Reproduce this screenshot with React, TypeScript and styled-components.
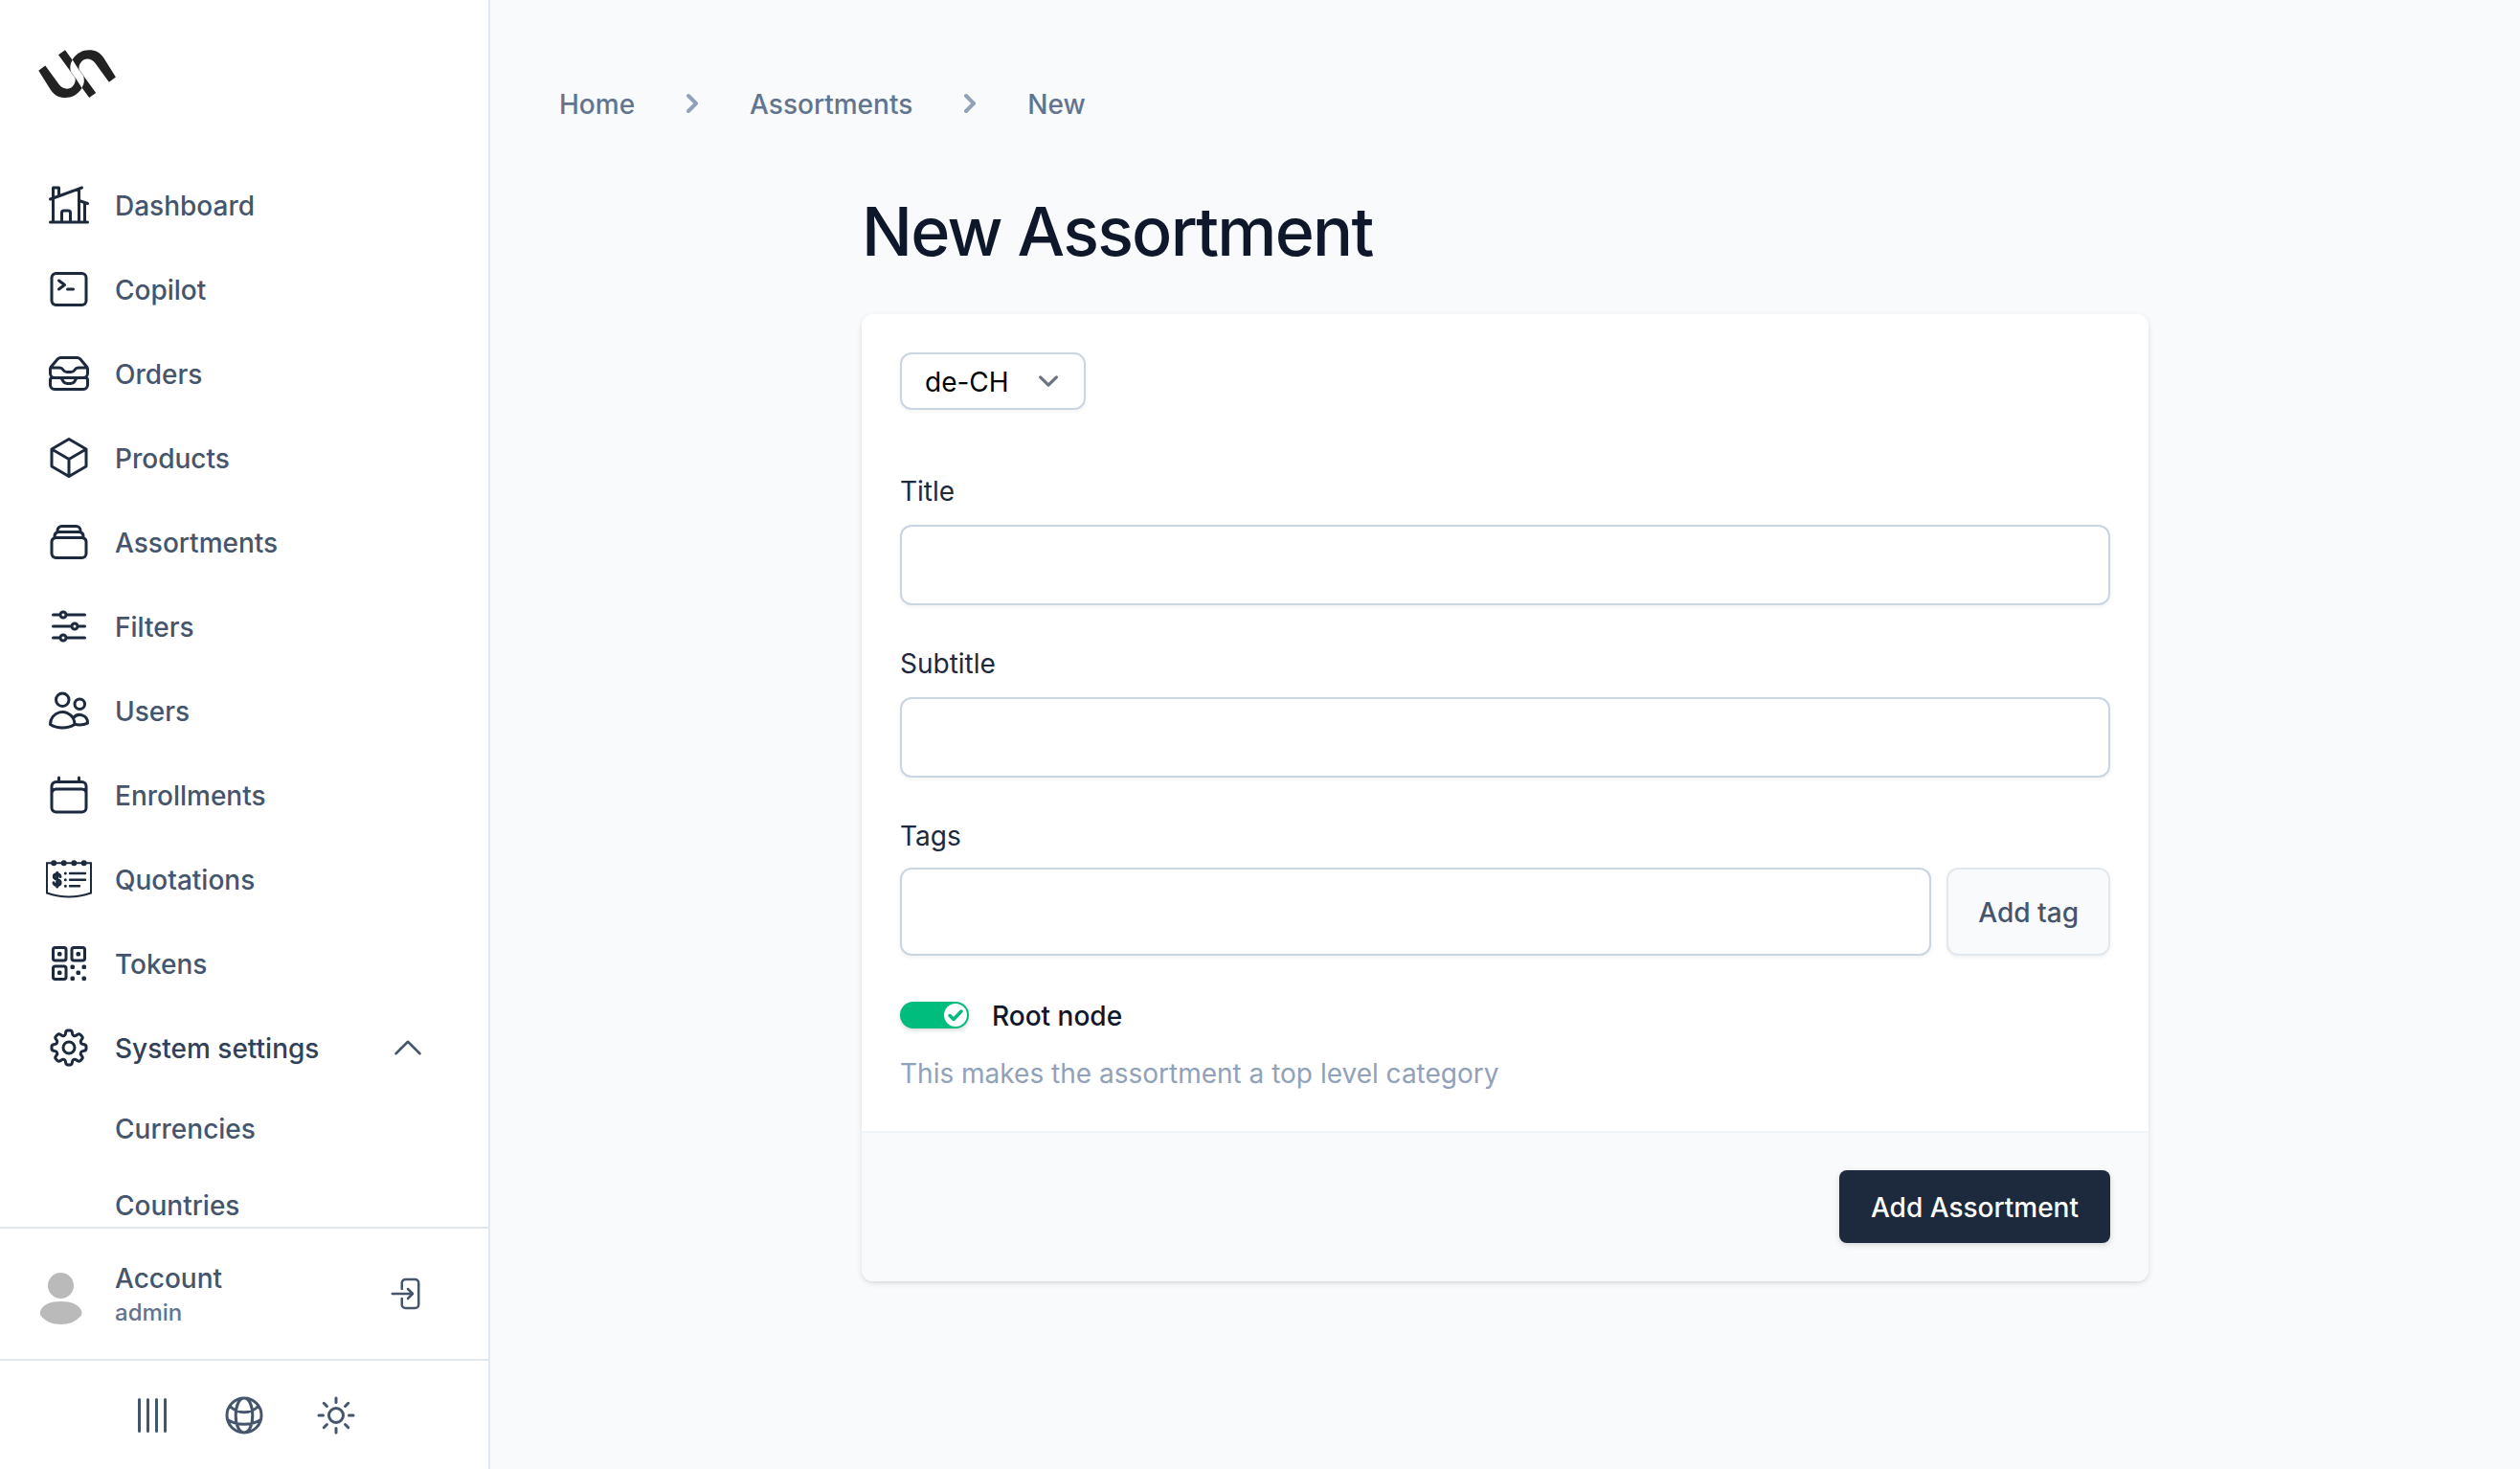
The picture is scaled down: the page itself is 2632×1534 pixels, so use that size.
import React, { useState } from "react";
import styled, { createGlobalStyle, css } from "styled-components";

const GlobalStyle = createGlobalStyle`
  *, *::before, *::after { box-sizing: border-box; }
  body {
    margin: 0;
    background: #f8fafc;
    color: #0f172b;
    font-family: Inter, "Liberation Sans", sans-serif;
    font-size: 28px;
    line-height: 40px;
  }
  button, input, select { font: inherit; }
`;

const Shell = styled.div`
  display: flex;
  height: 100vh;
  overflow: hidden;
`;

const Sidebar = styled.aside`
  flex: none;
  width: 512px;
  display: flex;
  flex-direction: column;
  background: #fff;
  border-right: 2px solid #e2e8f0;
`;

const LogoLink = styled.a`
  display: block;
  flex: none;
  padding: 48px 40px 0;
  height: 166px;
`;

const NavArea = styled.nav`
  flex: 1;
  min-height: 0;
  overflow: hidden;
  padding: 8px 32px 0;
`;

const List = styled.ul`
  display: flex;
  flex-direction: column;
  gap: 8px;
  margin: 0;
  padding: 0;
  list-style: none;
`;

const rowStyle = css`
  display: flex;
  align-items: center;
  gap: 24px;
  width: 100%;
  height: 80px;
  padding: 0 16px;
  border: 0;
  background: none;
  color: #45556c;
  font-weight: 500;
  text-align: left;
  text-decoration: none;
`;

const NavLink = styled.a`${rowStyle}`;
const NavToggle = styled.button`
  ${rowStyle}
  padding-right: 32px;
  color: #314158;
`;
const RowLabel = styled.span`
  flex: 1;
  padding-top: 2px;
`;

const SubLink = styled.a`
  display: block;
  padding: 17px 16px 15px 88px;
  line-height: 40px;
  color: #45556c;
  font-weight: 500;
  text-decoration: none;
`;

const IconSvg = styled.svg<{ $size?: number; $color?: string }>`
  flex: none;
  display: block;
  width: ${(p) => p.$size ?? 48}px;
  height: ${(p) => p.$size ?? 48}px;
  color: ${(p) => p.$color ?? "#1d293d"};
  overflow: visible;
`;

const AccountBar = styled.div`
  flex: none;
  display: flex;
  align-items: center;
  height: 138px;
  padding: 0 64px 0 40px;
  border-top: 2px solid #e2e8f0;
`;

const AccountText = styled.a`
  flex: 1;
  display: flex;
  flex-direction: column;
  margin-left: 32px;
  padding-top: 2px;
  color: #45556c;
  font-weight: 500;
  line-height: 38px;
  text-decoration: none;
`;

const AccountName = styled.span`
  color: #62748e;
  font-size: 24px;
  line-height: 34px;
`;

const IconButton = styled.button`
  display: flex;
  padding: 0;
  border: 0;
  background: none;
`;

const ToolBar = styled.div`
  flex: none;
  display: flex;
  justify-content: center;
  align-items: center;
  gap: 48px;
  height: 115px;
  border-top: 2px solid #e2e8f0;
`;

const Main = styled.main`
  flex: 1;
  min-width: 0;
  padding: 87px 72px 0;
`;

const Crumbs = styled.ol`
  display: flex;
  align-items: center;
  gap: 40px;
  margin: 0;
  padding: 0;
  list-style: none;
`;

const CrumbItem = styled.li`
  display: flex;
  align-items: center;
  gap: 40px;
`;

const CrumbLink = styled.a`
  padding-top: 2px;
  color: #62748e;
  font-weight: 500;
  text-decoration: none;
`;

const Content = styled.div`
  max-width: 1344px;
  margin: 0 auto;
`;

const Title = styled.h1`
  margin: 73px 0 46px;
  font-size: 70px;
  line-height: 80px;
  font-weight: 500;
  letter-spacing: -0.025em;
  color: #0f172b;
`;

const Card = styled.form`
  overflow: hidden;
  border-radius: 12px;
  background: #fff;
  box-shadow: 0 2px 6px rgba(0, 0, 0, 0.1), 0 2px 4px -2px rgba(0, 0, 0, 0.1);
`;

const CardBody = styled.div`
  display: flex;
  flex-direction: column;
  align-items: stretch;
  padding: 40px;
`;

const SelectWrap = styled.div`
  display: grid;
  align-items: center;
  align-self: flex-start;
  margin-bottom: 64px;
  & > * { grid-area: 1 / 1; }
  & > svg { justify-self: end; margin-right: 18px; pointer-events: none; }
`;

const Select = styled.select`
  appearance: none;
  width: 194px;
  height: 60px;
  padding: 2px 64px 0 24px;
  border: 2px solid #cad5e2;
  border-radius: 12px;
  background: #fff;
  color: #000;
  box-shadow: 0 2px 4px rgba(0, 0, 0, 0.05);
`;

const Field = styled.div<{ $tight?: boolean }>`
  display: flex;
  flex-direction: column;
  gap: ${(p) => (p.$tight ? 13 : 15)}px;
  margin-bottom: ${(p) => (p.$tight ? 42 : 40)}px;
`;

const Label = styled.label`
  padding-top: 1px;
  color: #1d293d;
`;

const Input = styled.input<{ $tall?: boolean }>`
  flex: ${(p) => (p.$tall ? "1" : "none")};
  min-width: 0;
  height: ${(p) => (p.$tall ? 92 : 84)}px;
  padding: 0 24px;
  border: 2px solid #cad5e2;
  border-radius: 12px;
  background: #fff;
  color: #0f172b;
  box-shadow: 0 2px 4px rgba(0, 0, 0, 0.05);
`;

const TagRow = styled.div`
  display: flex;
  gap: 16px;
`;

const TagButton = styled.button`
  padding: 2px 31px 0;
  border: 2px solid #e2e8f0;
  border-radius: 12px;
  background: #f8fafc;
  color: #45556c;
  font-weight: 500;
  box-shadow: 0 2px 4px rgba(0, 0, 0, 0.05);
`;

const SwitchLabel = styled.label`
  display: flex;
  align-items: center;
  gap: 24px;
  height: 40px;
  color: #0f172b;
  font-weight: 500;
`;

const Switch = styled.input`
  appearance: none;
  flex: none;
  width: 72px;
  height: 28px;
  margin: 0;
  border-radius: 14px;
  background-color: ${(p) => (p.checked ? "#00bc7d" : "#cad5e2")};
  box-shadow: 0 2px 4px rgba(0, 0, 0, 0.15);
`;

const SwitchBox = styled.span<{ $on: boolean }>`
  display: grid;
  align-items: center;
  & > * { grid-area: 1 / 1; }
  & > svg {
    justify-self: ${(p) => (p.$on ? "end" : "start")};
    margin: 0 2px;
    pointer-events: none;
  }
`;

const SwitchText = styled.span`
  padding-top: 2px;
`;

const Hint = styled.p`
  margin: 21px 0 0;
  padding-bottom: 0;
  color: #90a1b9;
`;

const CardFooter = styled.div`
  display: flex;
  justify-content: flex-end;
  padding: 39px 40px 40px;
  border-top: 2px solid #f1f5f9;
  background: #f8fafc;
`;

const Submit = styled.button`
  height: 76px;
  padding: 2px 33px 0;
  border: 0;
  border-radius: 8px;
  background: #1d293d;
  color: #fff;
  font-weight: 500;
  box-shadow: 0 2px 6px rgba(0, 0, 0, 0.15);
`;

type IconProps = { d: string; size?: number; color?: string; weight?: number };

const LineIcon = ({ d, size, color, weight = 1.5 }: IconProps) => (
  <IconSvg $size={size} $color={color} viewBox="0 0 24 24" fill="none" stroke="currentColor"
    strokeWidth={weight} strokeLinecap="round" strokeLinejoin="round" aria-hidden="true">
    <path d={d} />
  </IconSvg>
);

const paths = {
  home: "M8.25 21v-4.875c0-.621.504-1.125 1.125-1.125h2.25c.621 0 1.125.504 1.125 1.125V21m0 0h4.5V3.545M12.75 21h7.5V10.75M2.25 21h1.5m18 0h-18M2.25 9l4.5-1.636M18.75 3l-1.5.545m0 6.205 3 1m1.5.5-1.5-.5M6.75 7.364V3h-3v18m3-13.636 10.5-3.819",
  command: "m6.75 7.5 3 2.25-3 2.25m4.5 0h3m-9 8.25h13.5A2.25 2.25 0 0 0 21 18V6a2.25 2.25 0 0 0-2.25-2.25H5.25A2.25 2.25 0 0 0 3 6v12a2.25 2.25 0 0 0 2.25 2.25Z",
  inbox: "m7.875 14.25 1.214 1.942a2.25 2.25 0 0 0 1.908 1.058h2.006c.776 0 1.497-.4 1.908-1.058l1.214-1.942M2.41 9h4.636a2.25 2.25 0 0 1 1.872 1.002l.164.246a2.25 2.25 0 0 0 1.872 1.002h2.092a2.25 2.25 0 0 0 1.872-1.002l.164-.246A2.25 2.25 0 0 1 16.954 9h4.636M2.41 9a2.25 2.25 0 0 0-.16.832V12a2.25 2.25 0 0 0 2.25 2.25h15A2.25 2.25 0 0 0 21.75 12V9.832c0-.287-.055-.57-.16-.832M2.41 9a2.25 2.25 0 0 1 .382-.632l3.285-3.832a2.25 2.25 0 0 1 1.708-.786h8.43c.657 0 1.281.287 1.709.786l3.284 3.832c.163.19.291.404.382.632M4.5 20.25h15A2.25 2.25 0 0 0 21.75 18v-2.625c0-.621-.504-1.125-1.125-1.125H3.375c-.621 0-1.125.504-1.125 1.125V18a2.25 2.25 0 0 0 2.25 2.25Z",
  cube: "m21 7.5-9-5.25L3 7.5m18 0-9 5.25m9-5.25v9l-9 5.25M3 7.5l9 5.25M3 7.5v9l9 5.25m0-9v9",
  stack: "M6 6.878V6a2.25 2.25 0 0 1 2.25-2.25h7.5A2.25 2.25 0 0 1 18 6v.878m-12 0c.235-.083.487-.128.75-.128h10.5c.263 0 .515.045.75.128m-12 0A2.25 2.25 0 0 0 4.5 9v.878m13.5-3A2.25 2.25 0 0 1 19.5 9v.878m0 0a2.246 2.246 0 0 0-.75-.128H5.25c-.263 0-.515.045-.75.128m15 0A2.25 2.25 0 0 1 21 12v6a2.25 2.25 0 0 1-2.25 2.25H5.25A2.25 2.25 0 0 1 3 18v-6c0-.98.626-1.813 1.5-2.122",
  sliders: "M10.5 6h9.75M10.5 6a1.5 1.5 0 1 1-3 0m3 0a1.5 1.5 0 1 0-3 0M3.75 6H7.5m3 12h9.75m-9.75 0a1.5 1.5 0 0 1-3 0m3 0a1.5 1.5 0 0 0-3 0m-3.75 0H7.5m9-6h3.75m-3.75 0a1.5 1.5 0 0 1-3 0m3 0a1.5 1.5 0 0 0-3 0m-9.75 0h9.75",
  users: "M15 19.128a9.38 9.38 0 0 0 2.625.372 9.337 9.337 0 0 0 4.121-.952 4.125 4.125 0 0 0-7.533-2.493M15 19.128v-.003c0-1.113-.285-2.16-.786-3.07M15 19.128v.106A12.318 12.318 0 0 1 8.624 21c-2.331 0-4.512-.645-6.374-1.766l-.001-.109a6.375 6.375 0 0 1 11.964-3.07M12 6.375a3.375 3.375 0 1 1-6.75 0 3.375 3.375 0 0 1 6.75 0Zm8.25 2.25a2.625 2.625 0 1 1-5.25 0 2.625 2.625 0 0 1 5.25 0Z",
  calendar: "M6.75 3v2.25M17.25 3v2.25M3 18.75V7.5a2.25 2.25 0 0 1 2.25-2.25h13.5A2.25 2.25 0 0 1 21 7.5v11.25m-18 0A2.25 2.25 0 0 0 5.25 21h13.5A2.25 2.25 0 0 0 21 18.75m-18 0v-7.5A2.25 2.25 0 0 1 5.25 9h13.5A2.25 2.25 0 0 1 21 11.25v7.5",
  qr: "M3.75 4.875c0-.621.504-1.125 1.125-1.125h4.5c.621 0 1.125.504 1.125 1.125v4.5c0 .621-.504 1.125-1.125 1.125h-4.5A1.125 1.125 0 0 1 3.75 9.375v-4.5ZM3.75 14.625c0-.621.504-1.125 1.125-1.125h4.5c.621 0 1.125.504 1.125 1.125v4.5c0 .621-.504 1.125-1.125 1.125h-4.5a1.125 1.125 0 0 1-1.125-1.125v-4.5ZM13.5 4.875c0-.621.504-1.125 1.125-1.125h4.5c.621 0 1.125.504 1.125 1.125v4.5c0 .621-.504 1.125-1.125 1.125h-4.5A1.125 1.125 0 0 1 13.5 9.375v-4.5Z M6.75 6.75h.75v.75h-.75v-.75ZM6.75 16.5h.75v.75h-.75v-.75ZM16.5 6.75h.75v.75h-.75v-.75ZM13.5 13.5h.75v.75h-.75v-.75ZM13.5 19.5h.75v.75h-.75v-.75ZM19.5 13.5h.75v.75h-.75v-.75ZM19.5 19.5h.75v.75h-.75v-.75ZM16.5 16.5h.75v.75h-.75v-.75Z",
  cog: "M10.343 3.94c.09-.542.56-.94 1.11-.94h1.093c.55 0 1.02.398 1.11.94l.149.894c.07.424.384.764.78.93.398.164.855.142 1.205-.108l.737-.527a1.125 1.125 0 0 1 1.45.12l.773.774c.39.389.44 1.002.12 1.45l-.527.737c-.25.35-.272.806-.107 1.204.165.397.505.71.93.78l.893.15c.543.09.94.559.94 1.109v1.094c0 .55-.397 1.02-.94 1.11l-.894.149c-.424.07-.764.383-.929.78-.165.398-.143.854.107 1.204l.527.738c.32.447.269 1.06-.12 1.45l-.774.773a1.125 1.125 0 0 1-1.449.12l-.738-.527c-.35-.25-.806-.272-1.203-.107-.398.165-.71.505-.781.929l-.149.894c-.09.542-.56.94-1.11.94h-1.094c-.55 0-1.019-.398-1.11-.94l-.148-.894c-.071-.424-.384-.764-.781-.93-.398-.164-.854-.142-1.204.108l-.738.527c-.447.32-1.06.269-1.45-.12l-.773-.774a1.125 1.125 0 0 1-.12-1.45l.527-.737c.25-.35.272-.806.108-1.204-.165-.397-.506-.71-.93-.78l-.894-.15c-.542-.09-.94-.56-.94-1.109v-1.094c0-.55.398-1.02.94-1.11l.894-.149c.424-.07.765-.383.93-.78.165-.398.143-.854-.108-1.204l-.526-.738a1.125 1.125 0 0 1 .12-1.45l.773-.773a1.125 1.125 0 0 1 1.45-.12l.737.527c.35.25.807.272 1.204.107.397-.165.71-.505.78-.929l.15-.894Z M15 12a3 3 0 1 1-6 0 3 3 0 0 1 6 0Z",
  chevronUp: "m4.5 15.75 7.5-7.5 7.5 7.5",
  exit: "M8.25 9V5.25A2.25 2.25 0 0 1 10.5 3h6a2.25 2.25 0 0 1 2.25 2.25v13.5A2.25 2.25 0 0 1 16.5 21h-6a2.25 2.25 0 0 1-2.25-2.25V15M12 9l3 3m0 0-3 3m3-3H2.25",
  bars: "M5.25 3.75v16.5M9.75 3.75v16.5M14.25 3.75v16.5M18.75 3.75v16.5",
  globe: "M12 21a9 9 0 1 0 0-18 9 9 0 0 0 0 18ZM12 21c-2.6 0-4.4-4-4.4-9s1.8-9 4.4-9 4.4 4 4.4 9-1.8 9-4.4 9ZM4.8 7.3C6.500 9.300 9 10.350 12 10.350s5.500-1.050 7.200-3.050M3.300 14.200C5.800 15.800 8.800 16.600 12 16.600s6.200-.8 8.700-2.400",
  sun: "M12 3v2.250m6.364.386-1.591 1.591M21 12h-2.250m-.386 6.364-1.591-1.591M12 18.750V21m-4.773-4.227-1.591 1.591M5.250 12H3m4.227-4.773L5.636 5.636M15.750 12a3.750 3.750 0 1 1-7.500 0 3.750 3.750 0 0 1 7.500 0Z",
};

const QuoteIcon = () => (
  <IconSvg viewBox="0 0 48 48" fill="none" stroke="currentColor" strokeWidth="2" strokeLinecap="round" aria-hidden="true">
    <path d="M1 7.300H47V38.500Q24 46.500 1 38.500Z" strokeLinecap="butt" />
    <path d="M8.200 7.300h.01M18.700 7.300h.01M29.300 7.300h.01M39.700 7.300h.01" strokeWidth="6" />
    <path d="M25 18H41M25 24.700H41M25 31.300H35" strokeWidth="2.400" />
    <path d="M20.300 18h.01M20.300 24.700h.01M20.300 31.300h.01" strokeWidth="3" />
    <path d="M15 21.500C14.700 19.600 13.300 18.800 11.600 18.800 9.500 18.800 8.300 20 8.300 21.500 8.300 25.300 15.100 23.600 15.100 27.600 15.100 29.400 13.600 30.500 11.600 30.500 9.500 30.500 8.200 29.500 8 27.700M11.700 17.300V32" strokeWidth="3" />
  </IconSvg>
);

const CrumbArrow = () => (
  <IconSvg $size={40} $color="#90a1b9" viewBox="0 0 20 20" fill="currentColor" aria-hidden="true">
    <path fillRule="evenodd" d="M7.293 14.707a1 1 0 010-1.414L10.586 10 7.293 6.707a1 1 0 011.414-1.414l4 4a1 1 0 010 1.414l-4 4a1 1 0 01-1.414 0z" />
  </IconSvg>
);

const LogoSvg = styled.svg`
  display: block;
  width: 82px;
  height: 56px;
`;

const logoHalf =
  "M.3 25.700 7.300 20.500 21.500 40C25 45 32 46.500 36 42 38.600 39 39.300 36 38.300 32.500L45.600 44C41 51 35 54 28.300 54 21 54 17 51.500 13 46ZM21 9.300 28 4.300 35.700 14.700C33 18.500 32.700 23 34.300 27.500Z";

const Logo = () => (
  <LogoSvg viewBox="0 0 82 56" fill="#222" aria-hidden="true">
    <path d={logoHalf} />
    <path d={logoHalf} transform="rotate(180 40.600 29.100)" />
    <path d="M34 27 38.500 33.500M47.200 31.200 42.700 24.700" stroke="#222" strokeWidth=".4" />
  </LogoSvg>
);

const AvatarSvg = styled.svg`
  flex: none;
  width: 48px;
  height: 66px;
  display: block;
`;

const items: [string, string][] = [
  ["Dashboard", "home"], ["Copilot", "command"], ["Orders", "inbox"], ["Products", "cube"],
  ["Assortments", "stack"], ["Filters", "sliders"], ["Users", "users"], ["Enrollments", "calendar"],
  ["Quotations", "quote"], ["Tokens", "qr"],
];

export default function App() {
  const [root, setRoot] = useState(true);
  return (
    <Shell>
      <GlobalStyle />
      <Sidebar>
        <LogoLink href="#" aria-label="Unchained"><Logo /></LogoLink>
        <NavArea>
          <List>
            {items.map(([label, icon]) => (
              <li key={label}>
                <NavLink href="#">
                  {icon === "quote" ? <QuoteIcon /> : <LineIcon d={paths[icon as keyof typeof paths]} />}
                  <RowLabel>{label}</RowLabel>
                </NavLink>
              </li>
            ))}
            <li>
              <NavToggle type="button" aria-expanded="true">
                <LineIcon d={paths.cog} />
                <RowLabel>System settings</RowLabel>
                <LineIcon d={paths.chevronUp} size={40} color="#45556c" />
              </NavToggle>
            </li>
            <li><SubLink href="#">Currencies</SubLink></li>
            <li><SubLink href="#">Countries</SubLink></li>
          </List>
        </NavArea>
        <AccountBar>
          <AvatarSvg viewBox="0 -10 48 66" fill="#bababa" aria-hidden="true">
            <circle cx="23.500" cy="14.500" r="13.500" />
            <path d="M2 41.500C4 34 13 31 23.500 31S43 34 45.300 41.500V45C40 52 32 55 23.500 55S7 52 2 45Z" />
          </AvatarSvg>
          <AccountText href="#">Account<AccountName>admin</AccountName></AccountText>
          <IconButton type="button" aria-label="Log out"><LineIcon d={paths.exit} size={40} color="#45556c" /></IconButton>
        </AccountBar>
        <ToolBar>
          <IconButton type="button" aria-label="Collapse"><LineIcon d={paths.bars} color="#45556c" /></IconButton>
          <IconButton type="button" aria-label="Language"><LineIcon d={paths.globe} color="#45556c" /></IconButton>
          <IconButton type="button" aria-label="Theme"><LineIcon d={paths.sun} color="#45556c" /></IconButton>
        </ToolBar>
      </Sidebar>
      <Main>
        <nav aria-label="Breadcrumb">
          <Crumbs>
            {["Home", "Assortments", "New"].map((c, i) => (
              <CrumbItem key={c}>
                {i > 0 && <CrumbArrow />}
                <CrumbLink href="#">{c}</CrumbLink>
              </CrumbItem>
            ))}
          </Crumbs>
        </nav>
        <Content>
          <Title>New Assortment</Title>
          <Card onSubmit={(e) => e.preventDefault()}>
            <CardBody>
              <SelectWrap>
                <Select aria-label="Language" defaultValue="de-CH"><option>de-CH</option></Select>
                <IconSvg $size={42} $color="#6b7280" viewBox="0 0 20 20" fill="none" stroke="currentColor"
                  strokeWidth="1.5" strokeLinecap="round" strokeLinejoin="round" aria-hidden="true">
                  <path d="M6 8l4 4 4-4" />
                </IconSvg>
              </SelectWrap>
              <Field><Label htmlFor="title">Title</Label><Input id="title" /></Field>
              <Field><Label htmlFor="subtitle">Subtitle</Label><Input id="subtitle" /></Field>
              <Field $tight>
                <Label htmlFor="tags">Tags</Label>
                <TagRow><Input id="tags" $tall /><TagButton type="button">Add tag</TagButton></TagRow>
              </Field>
              <SwitchLabel>
                <SwitchBox $on={root}>
                  <Switch type="checkbox" role="switch" checked={root} onChange={(e) => setRoot(e.target.checked)} />
                  <IconSvg $size={24} viewBox="0 0 24 24" aria-hidden="true">
                    <circle cx="12" cy="12" r="12" fill="#fff" />
                    {root && <path d="m6 12.500 4 4L18 8" fill="none" stroke="#00bc7d" strokeWidth="3.500" strokeLinecap="round" strokeLinejoin="round" />}
                  </IconSvg>
                </SwitchBox>
                <SwitchText>Root node</SwitchText>
              </SwitchLabel>
              <Hint>This makes the assortment a top level category</Hint>
            </CardBody>
            <CardFooter><Submit type="submit">Add Assortment</Submit></CardFooter>
          </Card>
        </Content>
      </Main>
    </Shell>
  );
}
